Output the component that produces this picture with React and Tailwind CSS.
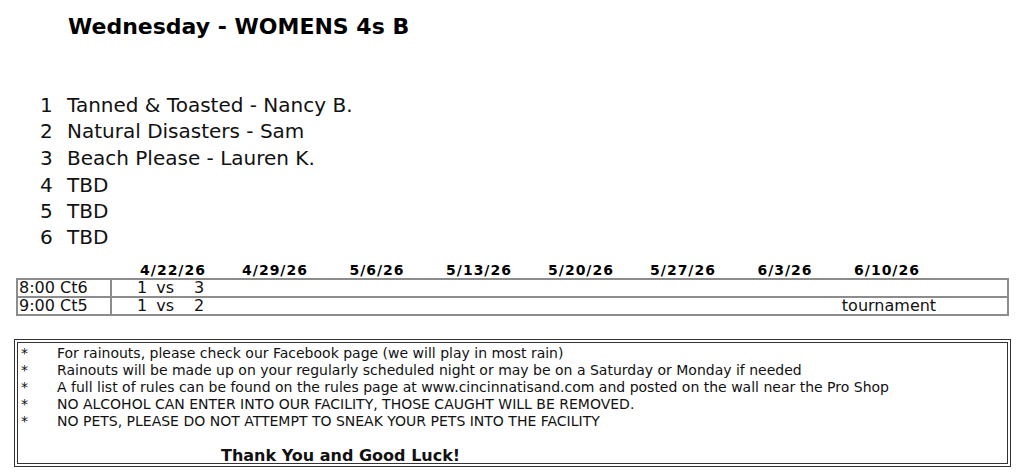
const teams = [
    ["1", "Tanned & Toasted - Nancy B.", "h-[26px]"],
    ["2", "Natural Disasters - Sam", "h-[26px]"],
    ["3", "Beach Please - Lauren K.", "h-[28px]"],
    ["4", "TBD", "h-[26px]"],
    ["5", "TBD", "h-[26px]"],
    ["6", "TBD", "h-[26px]"],
];

const dates = ["4/22/26", "4/29/26", "5/6/26", "5/13/26", "5/20/26", "5/27/26", "6/3/26", "6/10/26"];

const notes = [
    "For rainouts, please check our Facebook page (we will play in most rain)",
    "Rainouts will be made up on your regularly scheduled night or may be on a Saturday or Monday if needed",
    "A full list of rules can be found on the rules page at www.cincinnatisand.com and posted on the wall near the Pro Shop",
    "NO ALCOHOL CAN ENTER INTO OUR FACILITY, THOSE CAUGHT WILL BE REMOVED.",
    "NO PETS, PLEASE DO NOT ATTEMPT TO SNEAK YOUR PETS INTO THE FACILITY",
];

const COLS = "grid grid-cols-[94px_12px_repeat(8,102px)_1fr]";

// one game cell: "1  vs  3"
const Match = ({ a, b }) => (
    <div className="flex shrink-0 whitespace-nowrap">
        <span className="ml-[25px]">{a}</span>
        <span className="ml-[9px]">vs</span>
        <span className="ml-[20px]">{b}</span>
    </div>
);

const App = () => {
    return (
        <div className="w-[1024px] h-[475px] bg-white text-black overflow-hidden font-['DejaVu_Sans','Liberation_Sans',sans-serif]">
            {/* title */}
            <div className="pt-[14px] pl-[68px] h-[92px]">
                <h1 className="text-[22px] leading-[26px] font-bold">Wednesday - WOMENS 4s B</h1>
            </div>

            {/* teams */}
            <div className="pl-[40px] text-[20px] text-[#111]">
                {teams.map(([n, name, h]) => (
                    <div key={n} className={`flex items-center ${h}`}>
                        <span className="w-[27px]">{n}</span>
                        <span>{name}</span>
                    </div>
                ))}
            </div>

            {/* schedule */}
            <div className="pt-[6px] pl-[16px] pr-[15px]">
                <div className={`${COLS} h-[22px] items-end text-[14px] leading-[16px] tracking-[1px] font-bold`}>
                    <div />
                    <div />
                    {dates.map((d) => (
                        <div key={d} className="text-center">{d}</div>
                    ))}
                    <div />
                </div>
                <div className="border-2 border-[#8c8c8c] text-[16px] leading-[16px] text-[#111]">
                    <div className="flex h-[18px] items-center border-b-2 border-[#8c8c8c]">
                        <div className="w-[94px] shrink-0 pl-[1px] h-full flex items-center border-r-2 border-[#8c8c8c]">8:00 Ct6</div>
                        <Match a="1" b="3" />
                    </div>
                    <div className={`${COLS} h-[16px] items-center`}>
                        <div className="pl-[1px] h-full flex items-center border-r-2 border-[#8c8c8c]">9:00 Ct5</div>
                        <div className="col-span-8">
                            <Match a="1" b="2" />
                        </div>
                        <div className="text-center">tournament</div>
                        <div />
                    </div>
                </div>
            </div>

            {/* notes */}
            <div className="mt-[23px] ml-[14px] w-[997px] h-[128px] border-[4px] border-double border-[#333] text-[14px] text-[#111]">
                <div className="pt-[2px]">
                    {notes.map((n) => (
                        <div key={n} className="flex h-[17px] items-center">
                            <span className="w-[39px] pl-[3px]">*</span>
                            <span>{n}</span>
                        </div>
                    ))}
                </div>
                <div className="pt-[16px] pl-[203px] font-bold text-[16px] leading-[20px]">Thank You and Good Luck!</div>
            </div>
        </div>
    );
};

export default App;
